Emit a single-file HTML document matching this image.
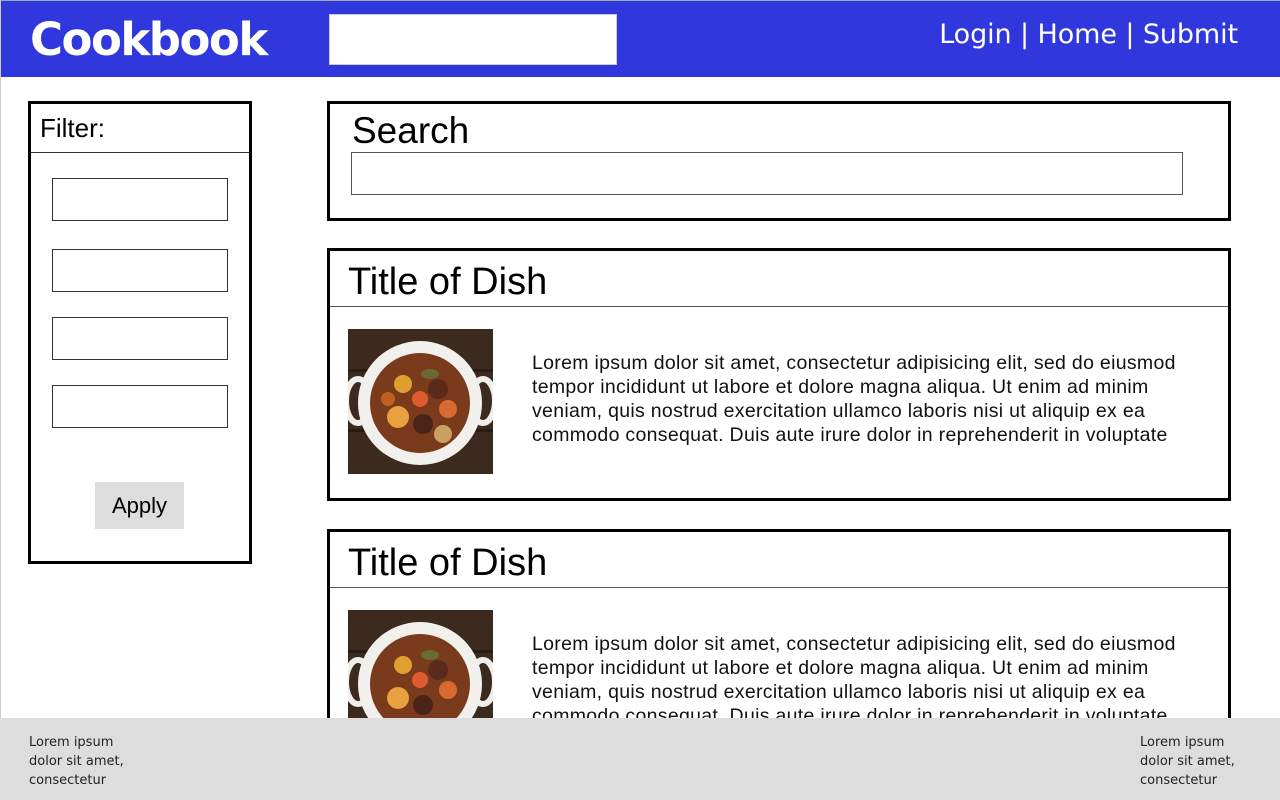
<!DOCTYPE html>
<html><head><style>
*{margin:0;padding:0;box-sizing:border-box}
body{width:1280px;height:800px;overflow:hidden;background:#fff;font-family:"Liberation Sans",sans-serif;position:relative}
.lb{position:absolute;left:0;top:0;width:1px;height:800px;background:#ccc}
.hdr{position:absolute;left:0;top:0;width:1280px;height:77px;background:#3038dd;border-top:1px solid #9aa}
.logo{position:absolute;left:30px;top:12px;color:#fff;font-weight:bold;font-size:45px;font-family:"DejaVu Sans",sans-serif;letter-spacing:-1.5px}
.hsearch{position:absolute;left:329px;top:13px;width:288px;height:51px;background:#fff;border:1px solid #ccd}
.nav{position:absolute;right:42px;top:18px;color:#fff;font-size:27px;font-family:"DejaVu Sans",sans-serif;letter-spacing:-0.1px}
.box{position:absolute;border:3px solid #000;background:#fff}
.inp{position:absolute;border:1px solid #333;background:#fff}
.card .t{position:absolute;left:18px;top:10px;font-size:38px}
.card .line{position:absolute;left:0;right:0;top:55px;border-top:1px solid #555}
.card .img{position:absolute;left:18px;top:78px;width:145px;height:145px}
.card .txt{position:absolute;left:202px;top:100px;font-size:19.5px;line-height:24px;width:680px;color:#111;letter-spacing:0.3px}
.foot{position:absolute;left:0;top:718px;width:1280px;height:82px;background:#dddddd;font-family:"DejaVu Sans",sans-serif;font-size:13px;line-height:19px;color:#222}
</style></head><body>
<div class="hdr">
<div class="logo">Cookbook</div>
<div class="hsearch"></div>
<div class="nav">Login | Home | Submit</div>
</div>
<div class="lb"></div>

<div class="box" style="left:28px;top:101px;width:224px;height:463px">
<div style="position:absolute;left:9px;top:9px;font-size:26px">Filter:</div>
<div style="position:absolute;left:0;right:0;top:48px;border-top:1px solid #333"></div>
<div class="inp" style="left:21px;top:74px;width:176px;height:43px"></div>
<div class="inp" style="left:21px;top:145px;width:176px;height:43px"></div>
<div class="inp" style="left:21px;top:213px;width:176px;height:43px"></div>
<div class="inp" style="left:21px;top:281px;width:176px;height:43px"></div>
<div style="position:absolute;left:64px;top:378px;width:89px;height:47px;background:#ddd;font-size:22px;text-align:center;line-height:47px">Apply</div>
</div>

<div class="box" style="left:327px;top:101px;width:904px;height:120px">
<div style="position:absolute;left:22px;top:6px;font-size:37px">Search</div>
<div class="inp" style="left:21px;top:48px;width:832px;height:43px;border-color:#555"></div>
</div>

<div class="box card" style="left:327px;top:248px;width:904px;height:253px">
<div class="t">Title of Dish</div><div class="line"></div>
<svg class="img" viewBox="0 0 145 145"><rect width="145" height="145" fill="#3d2a1e"/><rect x="0" y="40" width="145" height="3" fill="#2a1c14"/><rect x="0" y="100" width="145" height="3" fill="#2a1c14"/><ellipse cx="10" cy="72" rx="12" ry="22" fill="none" stroke="#eee" stroke-width="6"/><ellipse cx="135" cy="72" rx="12" ry="22" fill="none" stroke="#eee" stroke-width="6"/><circle cx="72" cy="74" r="62" fill="#f2f0ec"/><circle cx="72" cy="74" r="50" fill="#7a3a1c"/><circle cx="55" cy="55" r="9" fill="#e0a030"/><circle cx="90" cy="60" r="10" fill="#5a2a1a"/><circle cx="100" cy="80" r="9" fill="#d86a30"/><circle cx="50" cy="88" r="11" fill="#e8a040"/><circle cx="75" cy="95" r="10" fill="#4a2418"/><circle cx="95" cy="105" r="9" fill="#c8a060"/><circle cx="72" cy="70" r="8" fill="#e05a30"/><circle cx="40" cy="70" r="7" fill="#c06020"/><ellipse cx="82" cy="45" rx="9" ry="5" fill="#6a6a30"/></svg>
<div class="txt">Lorem ipsum dolor sit amet, consectetur adipisicing elit, sed do eiusmod tempor incididunt ut labore et dolore magna aliqua. Ut enim ad minim veniam, quis nostrud exercitation ullamco laboris nisi ut aliquip ex ea commodo consequat. Duis aute irure dolor in reprehenderit in voluptate</div>
</div>

<div class="box card" style="left:327px;top:529px;width:904px;height:253px">
<div class="t">Title of Dish</div><div class="line"></div>
<svg class="img" viewBox="0 0 145 145"><rect width="145" height="145" fill="#3d2a1e"/><rect x="0" y="40" width="145" height="3" fill="#2a1c14"/><ellipse cx="10" cy="72" rx="12" ry="22" fill="none" stroke="#eee" stroke-width="6"/><ellipse cx="135" cy="72" rx="12" ry="22" fill="none" stroke="#eee" stroke-width="6"/><circle cx="72" cy="74" r="62" fill="#f2f0ec"/><circle cx="72" cy="74" r="50" fill="#7a3a1c"/><circle cx="55" cy="55" r="9" fill="#e0a030"/><circle cx="90" cy="60" r="10" fill="#5a2a1a"/><circle cx="100" cy="80" r="9" fill="#d86a30"/><circle cx="50" cy="88" r="11" fill="#e8a040"/><circle cx="75" cy="95" r="10" fill="#4a2418"/><circle cx="72" cy="70" r="8" fill="#e05a30"/><ellipse cx="82" cy="45" rx="9" ry="5" fill="#6a6a30"/></svg>
<div class="txt">Lorem ipsum dolor sit amet, consectetur adipisicing elit, sed do eiusmod tempor incididunt ut labore et dolore magna aliqua. Ut enim ad minim veniam, quis nostrud exercitation ullamco laboris nisi ut aliquip ex ea commodo consequat. Duis aute irure dolor in reprehenderit in voluptate</div>
</div>

<div class="foot">
<div style="position:absolute;left:29px;top:15px">Lorem ipsum<br>dolor sit amet,<br>consectetur</div>
<div style="position:absolute;left:1140px;top:15px">Lorem ipsum<br>dolor sit amet,<br>consectetur</div>
</div>
</body></html>
